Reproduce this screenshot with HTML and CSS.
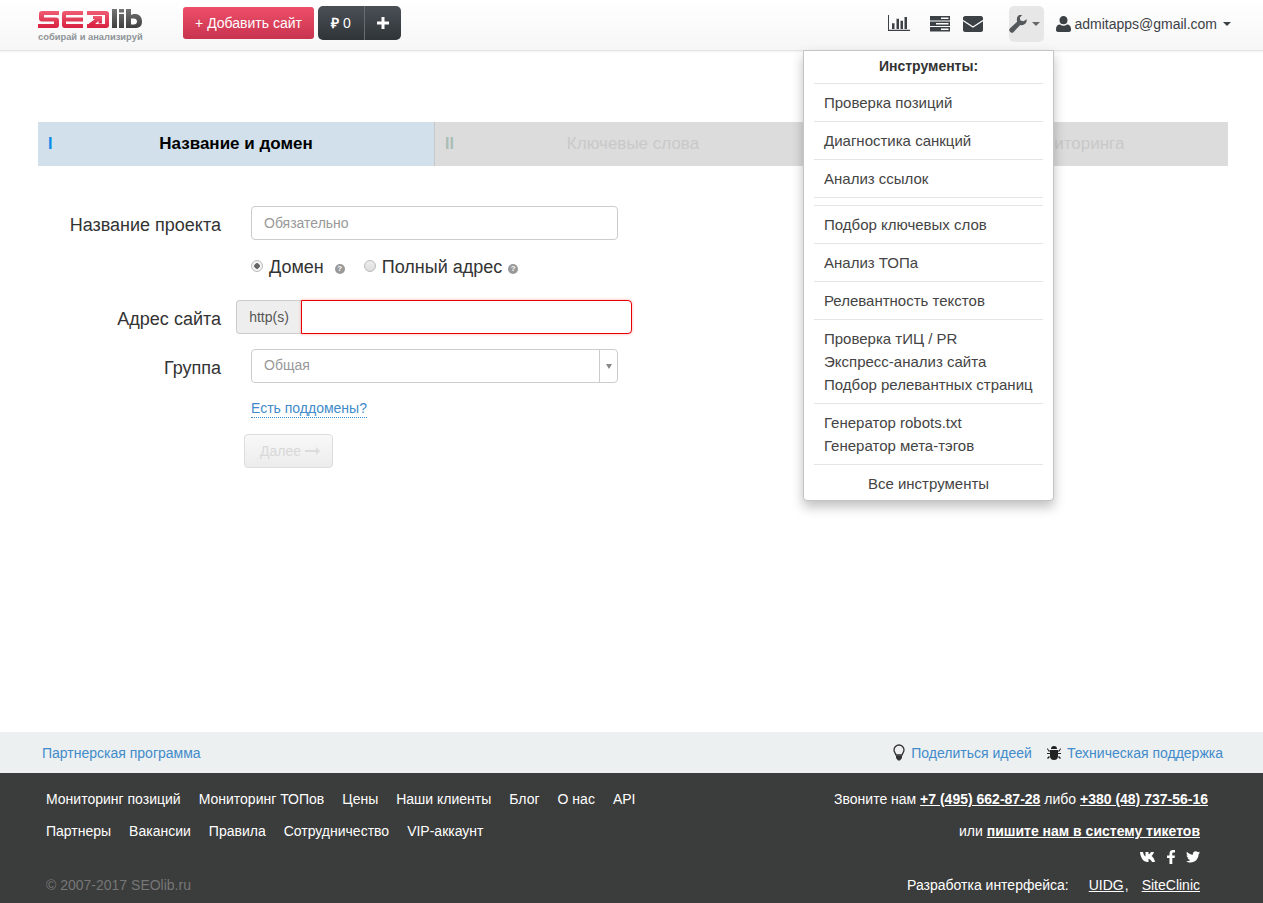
FILE: index.html
```html
<!DOCTYPE html>
<html lang="ru">
<head>
<meta charset="utf-8">
<title>SEOlib</title>
<link rel="stylesheet" href="styles.css">
</head>
<body>
<header class="topbar">
  <a class="logo">
    <svg class="logo-mark" width="106" height="21" viewBox="0 0 106 21">
      <defs>
        <linearGradient id="lg" x1="0" y1="0" x2="0" y2="1"><stop offset="0" stop-color="#ef5d73"/><stop offset="1" stop-color="#d8203f"/></linearGradient>
        <linearGradient id="lk" x1="0" y1="0" x2="0" y2="1"><stop offset="0" stop-color="#747474"/><stop offset="1" stop-color="#3e3e3e"/></linearGradient>
      </defs>
      <path fill="url(#lg)" d="M4 3H21V7H6V9.500H18c2 0 3 1 3 3V17c0 2-1 3-3 3H0V16H16V13.500H4C1.500 13.500 1 12 1 10.500V6C1 4 2 3 4 3z"/>
      <path fill="url(#lg)" d="M27 3H45V7H28V9.500H45V13.500H28V16H45V20H27c-2 0-3-1-3-3V6c0-2 1-3 3-3z"/>
      <path fill="url(#lg)" d="M49 3H68c2 0 3 1 3 3V17c0 2-1 3-3 3H49V16H67V7H49z"/>
      <path fill="url(#lg)" d="M55 8h9v7.500h-3.500v-2.500L56 17h-5v-1.500l6-4.500h-2z"/>
      <path fill="url(#lk)" fill-rule="evenodd" d="M74 1h5v19h-5zM81 1h5v3.500h-5zM81 6h5v14h-5zM88 1h5v6c1-.5 2-1 4-1 4 0 7 2.500 7 7.500S101 20 97 20H88zM93 10.500v6h3c1.500 0 3-1 3-3s-1.500-3-3-3z"/>
    </svg>
    <span class="logo-tag">собирай и анализируй</span>
  </a>
  <a class="btn-add">+ Добавить сайт</a>
  <div class="balance">
    <span class="balance-sum"><b>₽</b> 0</span>
    <span class="balance-plus">
      <svg width="12" height="12" viewBox="0 0 12 12"><path fill="#fff" d="M4.500 0h3v4.500H12v3H7.500V12h-3V7.500H0v-3h4.500z"/></svg>
    </span>
  </div>
  <nav class="top-icons">
    <svg class="ic-chart" width="22" height="16" viewBox="0 0 22 16"><path fill="#3c4146" d="M0 0h1v14.700h21V16H0zM4 8.300h2.500V14H4zM8.500 3.700H11V14H8.500zM12.500 5.700H15V14h-2.500zM16.500 2H19V14h-2.500z"/></svg>
    <svg class="ic-server" width="20" height="16" viewBox="0 0 20 16"><path fill="#3c4146" d="M0 0h20v4.500H0zM0 5.500h20V10H0zM0 11h20v4.500H0z"/><path fill="#fff" d="M11 1.500h7.500V3H11zM6 7h12.500v1.500H6zM11 12.500h7.500V14H11z"/></svg>
    <svg class="ic-mail" width="20" height="16" viewBox="0 0 20 16"><path fill="#3c4146" d="M2 0h16c1 0 2 1 2 2v12c0 1-1 2-2 2H2c-1 0-2-1-2-2V2C0 1 1 0 2 0z"/><path fill="none" stroke="#fff" stroke-width="1.300" d="M0 4.500l10 6.500 10-6.500"/></svg>
    <span class="tools-toggle">
      <svg width="18" height="18" viewBox="0 0 18 18"><path fill="#55585b" d="M17.600 4.200c.3 1.700-.2 3.400-1.400 4.600-1.400 1.300-3.300 1.700-5 1.100l-6.800 7.300c-.8.800-2 .8-2.800 0l-.8-.8c-.8-.8-.8-2 0-2.800l7.300-6.900C7.500 4 7.900 2.100 9.300.8 10.500-.4 12.200-.8 13.800-.5l-3 3 .6 3.100 3.100.6z"/></svg>
      <i class="caret caret-gray"></i>
    </span>
    <span class="user">
      <svg width="15" height="16" viewBox="0 0 15 16"><path fill="#3c4146" d="M7.500 0a4 4 0 0 1 4 4.200 4 4 0 0 1-8 0 4 4 0 0 1 4-4.200zM4 8.500c1 .8 2.200 1.200 3.500 1.200S10 9.300 11 8.500c2.500 0 4 2 4 4.500v1c0 1-1 2-2 2H2c-1 0-2-1-2-2v-1c0-2.500 1.500-4.500 4-4.500z"/></svg>
      <span class="user-mail">admitapps@gmail.com</span>
      <i class="caret"></i>
    </span>
  </nav>
</header>

<div class="tools-menu">
  <div class="menu-title">Инструменты:</div>
  <div class="menu-sep"></div>
  <a class="menu-item">Проверка позиций</a>
  <div class="menu-sep"></div>
  <a class="menu-item">Диагностика санкций</a>
  <div class="menu-sep"></div>
  <a class="menu-item">Анализ ссылок</a>
  <div class="menu-sep"></div>
  <div class="menu-gap"></div>
  <div class="menu-sep"></div>
  <a class="menu-item">Подбор ключевых слов</a>
  <div class="menu-sep"></div>
  <a class="menu-item">Анализ ТОПа</a>
  <div class="menu-sep"></div>
  <a class="menu-item">Релевантность текстов</a>
  <div class="menu-sep"></div>
  <div class="menu-group">
    <a class="menu-line">Проверка тИЦ / PR</a>
    <a class="menu-line">Экспресс-анализ сайта</a>
    <a class="menu-line">Подбор релевантных страниц</a>
  </div>
  <div class="menu-sep"></div>
  <div class="menu-group">
    <a class="menu-line">Генератор robots.txt</a>
    <a class="menu-line">Генератор мета-тэгов</a>
  </div>
  <div class="menu-sep"></div>
  <a class="menu-all">Все инструменты</a>
</div>

<main class="content">
  <div class="steps">
    <div class="step step-active"><span class="step-num">I</span><span class="step-name">Название и домен</span></div>
    <div class="step"><span class="step-num">II</span><span class="step-name">Ключевые слова</span></div>
    <div class="step"><span class="step-num">III</span><span class="step-name">Настройки мониторинга</span></div>
  </div>
  <form class="form">
    <div class="row row-name">
      <label class="label">Название проекта</label>
      <div class="field field-wide">Обязательно</div>
    </div>
    <div class="row row-radio">
      <span class="radio radio-on"></span><span class="radio-text">Домен</span>
      <span class="help help-a">?</span>
      <span class="radio radio-second"></span><span class="radio-text">Полный адрес</span>
      <span class="help help-b">?</span>
    </div>
    <div class="row row-addr">
      <label class="label">Адрес сайта</label>
      <div class="addon">http(s)</div>
      <div class="field-error"></div>
    </div>
    <div class="row row-group">
      <label class="label">Группа</label>
      <div class="field field-select">
        <span class="select-value">Общая</span>
        <span class="select-arrow"><i class="caret caret-small"></i></span>
      </div>
    </div>
    <div class="row row-sub"><a class="sub-link">Есть поддомены?</a></div>
    <div class="row row-next"><span class="btn-next">Далее <svg width="15" height="8" viewBox="0 0 15 8"><path fill="#dcdcdc" d="M0 3h11V0l4 4-4 4V5H0z"/></svg></span></div>
  </form>
</main>

<footer class="footer">
  <div class="footer-light">
    <a class="flink">Партнерская программа</a>
    <div class="footer-help">
      <svg width="12" height="17" viewBox="0 0 12 17"><path fill="none" stroke="#333" stroke-width="1.300" d="M6 1a5 5 0 0 1 5 5c0 2-1.500 3-2 5H3C2.500 9 1 8 1 6a5 5 0 0 1 5-5z"/><path fill="#333" d="M3 11.500h6V14l-2 2.500H5L3 14z"/></svg>
      <a class="flink">Поделиться идеей</a>
      <svg class="ic-bug" width="14" height="14" viewBox="0 0 14 14"><path fill="#222" d="M4 3a3 3 0 0 1 6 0zM3 4h8v6a4 4 0 0 1-8 0zM0 2l3 3-1 1-2-3zM14 2l-3 3 1 1 2-3zM0 7h3v1H0zM11 7h3v1h-3zM2 10l1 1-2 2-1-1zM12 10l-1 1 2 2 1-1z"/></svg>
      <a class="flink">Техническая поддержка</a>
    </div>
  </div>
  <div class="footer-dark">
    <div class="fcol-left">
      <div class="fnav">
        <a>Мониторинг позиций</a><a>Мониторинг ТОПов</a><a>Цены</a><a>Наши клиенты</a><a>Блог</a><a>О нас</a><a>API</a>
      </div>
      <div class="fnav fnav-2">
        <a>Партнеры</a><a>Вакансии</a><a>Правила</a><a>Сотрудничество</a><a>VIP-аккаунт</a>
      </div>
      <div class="copy">© 2007-2017 SEOlib.ru</div>
    </div>
    <div class="fcol-right">
      <div class="fphone">Звоните нам <a class="strong">+7 (495) 662-87-28</a> либо <a class="strong">+380 (48) 737-56-16</a></div>
      <div class="fticket">или <a class="strong">пишите нам в систему тикетов</a></div>
      <div class="fsocial">
        <svg width="16" height="10" viewBox="0 0 16 10"><path fill="#fff" d="M0 0h3c.5 2.500 1.500 4 2.500 4.500V0h3v2.500C9.500 2.200 10.500 1 11 0h3c-.3 1.500-1.500 3-2.500 4 1.200.8 3 2.500 3.500 6h-3c-.5-1.500-2-3-3.500-3.300V10H7.500C3.500 10 .5 6 0 0z"/></svg>
        <svg width="8" height="14" viewBox="0 0 8 14"><path fill="#fff" d="M2.500 14V8H0V5.500h2.500V3.500C2.500 1 4 0 6 0h2v2.500H6.500c-1 0-1.200.5-1.200 1.200v1.800H8L7.600 8H5.300v6z"/></svg>
        <svg width="14" height="12" viewBox="0 0 14 12"><path fill="#fff" d="M14 1.500c-.5.2-1 .4-1.600.5.600-.4 1-.9 1.200-1.600-.5.300-1.100.6-1.800.7A2.900 2.900 0 0 0 6.900 3.700C4.500 3.600 2.400 2.400 1 .7.200 2 .6 3.700 1.900 4.600c-.5 0-.9-.1-1.300-.4 0 1.400 1 2.600 2.300 2.900-.4.100-.9.100-1.300 0 .4 1.200 1.500 2 2.700 2-1.200 1-2.700 1.400-4.300 1.200C1.300 11.200 2.800 11.600 4.400 11.600c5.300 0 8.300-4.500 8.200-8.500.6-.4 1-.9 1.400-1.600z"/></svg>
      </div>
      <div class="fdev"><span class="fdev-label">Разработка интерфейса:</span><a class="under">UIDG</a><span class="fdev-comma">,</span><a class="under">SiteClinic</a></div>
    </div>
  </div>
</footer>
</body>
</html>
```

FILE: styles.css
```css
* { box-sizing: border-box; }
html, body { margin: 0; padding: 0; }
body {
  position: relative;
  width: 1263px;
  height: 903px;
  display: flex;
  flex-direction: column;
  overflow: hidden;
  font-family: "Liberation Sans", Arial, sans-serif;
  font-size: 14px;
  color: #333;
  background: #fff;
}
a { color: inherit; text-decoration: none; }

/* top bar */
.topbar {
  flex: none;
  height: 51px;
  display: flex;
  align-items: flex-start;
  padding-left: 38px;
  background: linear-gradient(#fff, #f6f6f6);
  border-bottom: 1px solid #e4e4e4;
  box-shadow: 0 1px 2px rgba(0,0,0,.05);
}
.logo { width: 145px; display: flex; flex-direction: column; padding-top: 8px; }
.logo-mark { display: block; }
.logo-tag { font-size: 9.35px; font-weight: 700; color: #8f9498; line-height: 11px; margin-top: 3px; white-space: nowrap; }
.btn-add {
  margin-top: 7px;
  width: 131px;
  height: 32px;
  border-radius: 3px;
  background: linear-gradient(#ee4f68, #c7334f);
  color: #fff;
  text-align: center;
  line-height: 32px;
}
.balance {
  margin: 6px 0 0 4px;
  height: 34px;
  width: 83px;
  display: flex;
  border-radius: 5px;
  background: linear-gradient(#4a5056, #2f3438);
  color: #fff;
  line-height: 34px;
}
.balance-sum { width: 47px; text-align: center; border-right: 1px solid #6a6d6f; }
.balance-plus { flex: 1; display: flex; align-items: center; justify-content: center; }
.top-icons { margin-left: auto; display: flex; align-items: flex-start; padding-right: 32px; }
.ic-chart { margin-top: 15px; }
.ic-server { margin: 16px 0 0 20px; }
.ic-mail { margin: 16px 0 0 13px; }
.tools-toggle {
  margin: 6px 0 0 26px;
  width: 35px;
  height: 36px;
  display: flex;
  align-items: center;
  gap: 5px;
  background: #e7e7e7;
  border-radius: 5px;
}
.user { margin: 16px 0 0 12px; display: flex; align-items: center; height: 16px; color: #3c4146; }
.user-mail { margin-left: 3px; }
.caret {
  display: inline-block;
  width: 0; height: 0;
  margin-left: 6px;
  border-left: 4px solid transparent;
  border-right: 4px solid transparent;
  border-top: 4px solid #3c4146;
}
.caret-gray { margin-left: 0; border-top-color: #666; }
.caret-small { margin: 0; border-left-width: 3px; border-right-width: 3px; border-top: 5px solid #888; }

/* dropdown */
.tools-menu {
  position: absolute;
  left: 803px;
  top: 50px;
  width: 251px;
  height: 451px;
  padding: 0 10px;
  background: #fff;
  border: 1px solid #c4c4c4;
  border-radius: 0 0 4px 4px;
  box-shadow: 0 6px 12px rgba(0,0,0,.25);
  z-index: 5;
  color: #444;
  font-size: 15px;
}
.menu-title { height: 32px; line-height: 30px; text-align: center; font-size: 14px; font-weight: 700; color: #333; }
.menu-sep { height: 1px; background: #e5e5e5; }
.menu-item { display: block; height: 37px; line-height: 38px; padding-left: 10px; white-space: nowrap; }
.menu-gap { height: 7px; }
.menu-group { padding: 7px 0 7px 10px; }
.menu-line { display: block; height: 23px; line-height: 24px; white-space: nowrap; }
.menu-all { display: block; text-align: center; line-height: 38px; }

/* content */
.content { flex: 1; padding: 71px 35px 0 38px; }
.steps { display: flex; height: 44px; background: #dcdcdc; }
.step {
  position: relative;
  width: 33.33%;
  flex: 1;
  display: flex;
  align-items: center;
  justify-content: center;
  color: #c9c9c9;
  font-size: 17px;
  border-left: 1px solid #c8c8c8;
}
.step:first-child { border-left: 0; }
.step-active { background: #d2e0ec; color: #000; font-weight: 700; }
.step-num { position: absolute; left: 10px; top: 13px; font-size: 16px; font-weight: 700; color: #a9bcb6; }
.step-active .step-num { color: #0a8be8; }
.form { padding-top: 40px; }
.row { display: flex; align-items: center; }
.label { width: 183px; padding-top: 5px; text-align: right; font-size: 18px; color: #333; white-space: nowrap; }
.row-name { height: 34px; }
.field {
  height: 34px;
  border: 1px solid #ccc;
  border-radius: 4px;
  background: #fff;
  color: #999;
  line-height: 32px;
  padding-left: 12px;
}
.field-wide { margin-left: 30px; width: 367px; }
.row-radio { margin: 10px 0 0 213px; height: 34px; font-size: 18px; color: #333; }
.radio {
  width: 12px; height: 12px;
  margin-bottom: 2px;
  border-radius: 50%;
  border: 1px solid #bbb;
  background: linear-gradient(#eee, #ddd);
}
.radio-on { background: radial-gradient(circle, #666 0 2.500px, #f2f2f2 3px); }
.radio-text { margin-left: 6px; }
.radio-second { margin-left: 19px; }
.help {
  width: 10px; height: 10px;
  border-radius: 50%;
  background: #999;
  color: #fff;
  font-size: 8px;
  font-weight: 700;
  text-align: center;
  line-height: 10px;
  margin-top: 3px;
}
.help-a { margin-left: 11px; }
.help-b { margin-left: 6px; }
.row-addr { margin-top: 16px; height: 34px; }
.addon {
  margin-left: 15px;
  width: 65px;
  height: 34px;
  background: #eee;
  border: 1px solid #ccc;
  border-right: 0;
  border-radius: 4px 0 0 4px;
  text-align: center;
  line-height: 33px;
  color: #555;
}
.field-error {
  width: 331px;
  height: 34px;
  background: #fff;
  border: 1px solid #e80000;
  border-radius: 0 4px 4px 0;
  box-shadow: 0 0 3px rgba(255,0,0,.35);
}
.row-group { margin-top: 15px; height: 34px; }
.field-select {
  margin-left: 30px;
  width: 367px;
  display: flex;
  justify-content: space-between;
  padding-right: 0;
  line-height: 30px;
}
.select-arrow {
  width: 18px;
  border-left: 1px solid #ccc;
  display: flex;
  align-items: center;
  justify-content: center;
}
.row-sub { margin: 16px 0 0 213px; height: 19px; }
.sub-link { color: #428bca; border-bottom: 1px dotted #428bca; line-height: 17px; }
.row-next { margin: 16px 0 0 206px; }
.btn-next {
  width: 89px;
  height: 34px;
  display: flex;
  align-items: center;
  justify-content: center;
  gap: 4px;
  padding-left: 3px;
  border: 1px solid #ddd;
  border-radius: 4px;
  background: linear-gradient(#f8f8f8, #ececec);
  color: #d8d8d8;
}

/* footer */
.footer { flex: none; }
.footer-light {
  height: 41px;
  padding: 0 40px 0 42px;
  display: flex;
  align-items: center;
  justify-content: space-between;
  background: #ecf0f1;
}
.flink { color: #428bca; }
.footer-help { display: flex; align-items: center; }
.footer-help .flink { margin-left: 6px; }
.ic-bug { margin-left: 15px; }
.footer-dark {
  height: 130px;
  background: #3b3c3c;
  color: #fff;
  display: flex;
  justify-content: space-between;
  padding: 0 63px 0 46px;
}
.fnav { display: flex; gap: 18px; height: 32px; line-height: 32px; margin-top: 10px; }
.fnav-2 { margin-top: 0; }
.copy { margin-top: 30px; color: #777; line-height: 16px; }
.fcol-right { position: relative; width: 400px; text-align: right; }
.fphone { margin: 10px -8px 0 0; line-height: 32px; }
.fticket { line-height: 32px; }
.strong { font-weight: 700; text-decoration: underline; }
.under { text-decoration: underline; }
.fsocial { display: flex; justify-content: flex-end; align-items: center; gap: 11px; height: 18px; margin-top: 1px; }
.fdev { margin-top: 11px; line-height: 16px; }
.fdev-label { margin-right: 20px; }
.fdev-comma { margin: 0 13px 0 1px; }
```
